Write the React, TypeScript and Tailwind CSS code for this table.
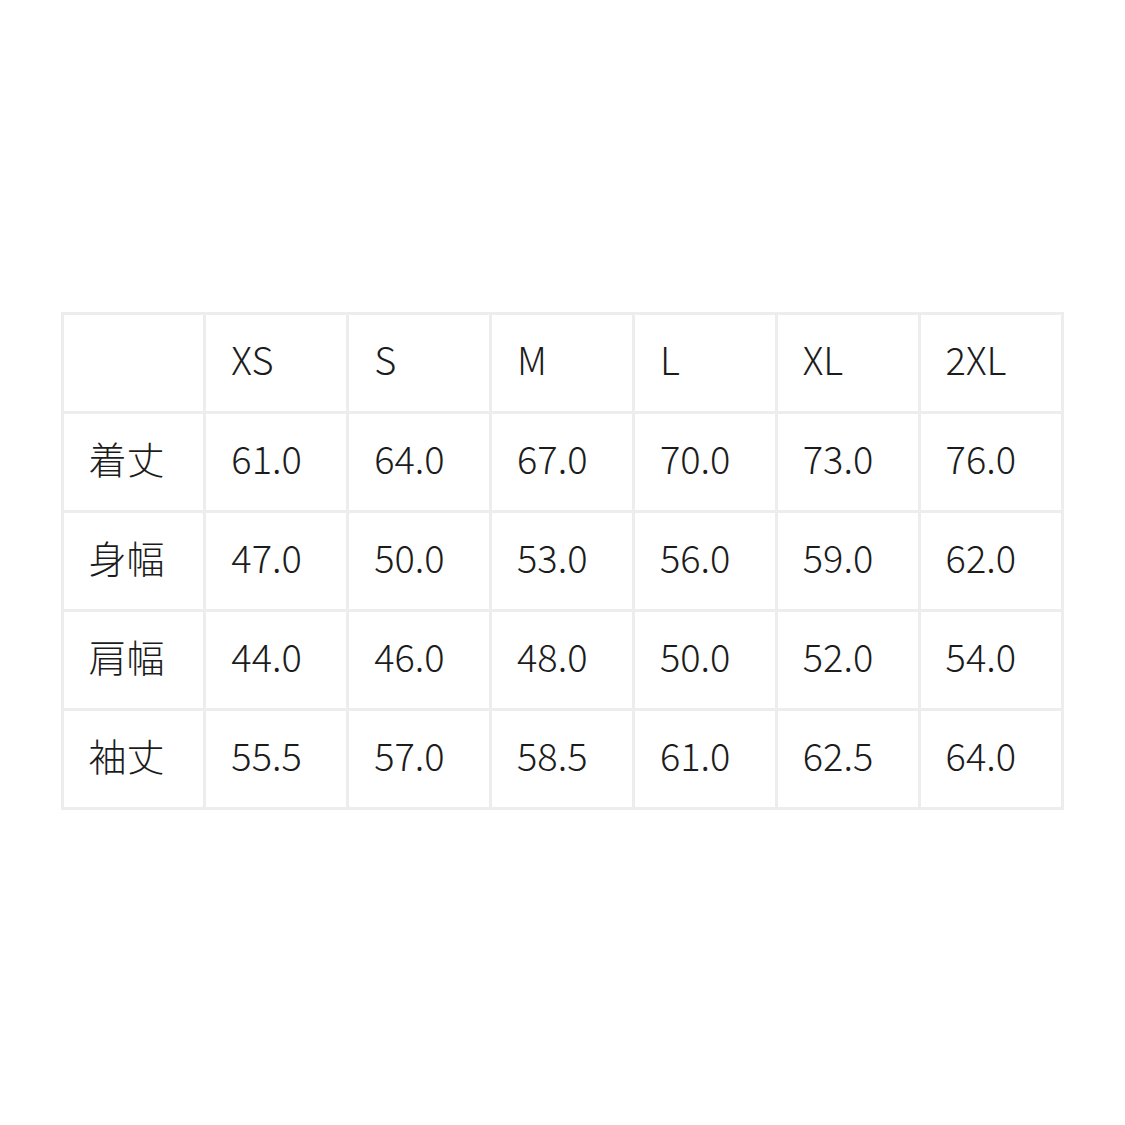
import React from 'react';

const SIZES = ['XS', 'S', 'M', 'L', 'XL', '2XL'];

const ROWS: { label: string; values: string[] }[] = [
  { label: '着丈', values: ['61.0', '64.0', '67.0', '70.0', '73.0', '76.0'] },
  { label: '身幅', values: ['47.0', '50.0', '53.0', '56.0', '59.0', '62.0'] },
  { label: '肩幅', values: ['44.0', '46.0', '48.0', '50.0', '52.0', '54.0'] },
  { label: '袖丈', values: ['55.5', '57.0', '58.5', '61.0', '62.5', '64.0'] },
];

const cell = 'border-[3px] border-[#ededed] h-[99px] pl-[25px] pb-[7px] text-left align-middle font-light leading-none';

export default function App() {
  return (
    <div
      className="w-[1125px] h-[1125px] bg-white flex items-center justify-center text-[#1c1c1c] text-[38px]"
      style={{ fontFamily: '"Noto Sans CJK JP", "Noto Sans", sans-serif' }}
    >
      <table className="table-fixed border-collapse w-[1003px] mt-[-4px] ml-[-1px]">
        <thead>
          <tr>
            <th className={cell} />
            {SIZES.map(s => (
              <th key={s} className={cell}>{s}</th>
            ))}
          </tr>
        </thead>
        <tbody>
          {ROWS.map(row => (
            <tr key={row.label}>
              <td className={cell}>{row.label}</td>
              {row.values.map((v, i) => (
                <td key={i} className={cell}>{v}</td>
              ))}
            </tr>
          ))}
        </tbody>
      </table>
    </div>
  );
}
